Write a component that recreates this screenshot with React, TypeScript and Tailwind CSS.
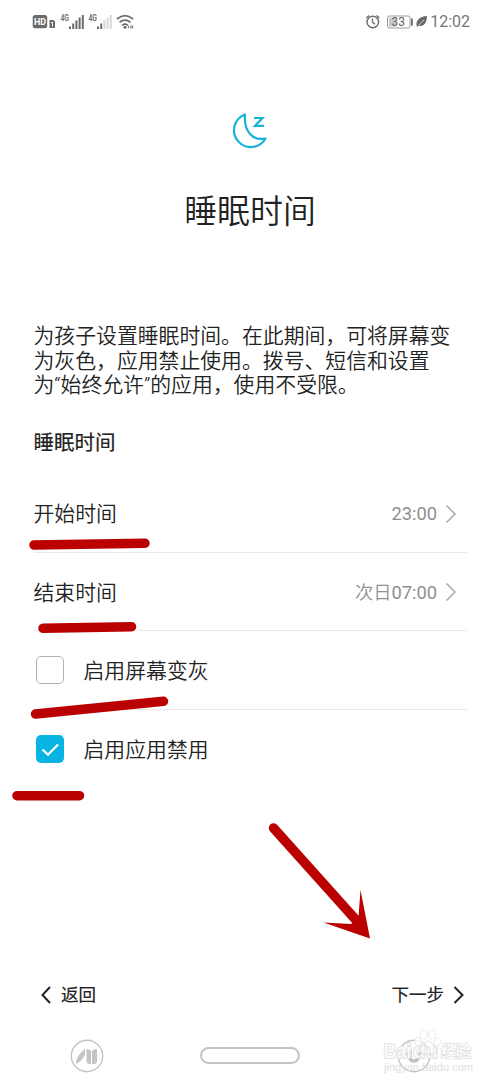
import type { ReactNode } from "react";

function StatusBar() {
  return (
    <header className="flex h-[42px] items-center justify-between pl-8 pr-[30px] pt-px text-[#6b6b6b]">
      <svg width="108" height="24" viewBox="32 9 108 24" fill="currentColor" className="font-['Roboto',sans-serif]">
        <rect x="32.7" y="14" width="14.5" height="13.3" rx="2.5" />
        <text x="34" y="24.2" fontSize="9.500" fontWeight="700" fill="#fff" textLength="12" lengthAdjust="spacingAndGlyphs">HD</text>
        <path d="M49.500 19h4l1.500 1.500V27h-5.500z" />
        <path d="M51 21.500h1.500v4" fill="none" stroke="#fff" strokeWidth="1" />
        <text x="60.500" y="19.500" fontSize="9" fontWeight="600" textLength="8.500" lengthAdjust="spacingAndGlyphs">4G</text>
        <path d="M69 25.500h2V28h-2zM72.200 22.500h2V28h-2zM75.400 19.500h2V28h-2zM78.600 16.500h2V28h-2zM81.800 14h2v14h-2z" />
        <text x="88.500" y="19.500" fontSize="9" fontWeight="600" textLength="8.500" lengthAdjust="spacingAndGlyphs">4G</text>
        <path d="M97 25.500h2V28h-2zM100.200 22.500h2V28h-2z" />
        <path d="M103.400 19.500h2V28h-2zM106.600 16.500h2V28h-2zM109.800 14h2v14h-2z" fill="#d8d8d8" />
        <path d="M117 18q8-6.600 16 0M119.500 21.400q5.500-4.500 11 0M122 24.400q3-2.400 6 0" fill="none" stroke="currentColor" strokeWidth="1.700" />
        <circle cx="125" cy="26.200" r="1.500" />
        <path d="M127.700 26l1.400-1.800V27.800zM129.500 26.500h1v-2.300h1v3.600zM132.200 24.200v3.600l1.400-1.800z" />
      </svg>
      <div className="flex items-center">
        <svg width="66" height="24" viewBox="364 9 66 24" fill="none" stroke="currentColor">
          <circle cx="372.800" cy="21" r="5.800" strokeWidth="1.400" />
          <path d="M372.500 17.500v3.800l2.500 2M366.300 17l2.800-2.500M379.300 17l-2.800-2.500" strokeWidth="1.300" />
          <rect x="387.500" y="15" width="22.500" height="12" rx="1.800" stroke="#9b9b9b" />
          <path d="M389 16.500h7v9h-7z" fill="#c9c9c9" stroke="none" />
          <path d="M411.900 17.500v7" strokeWidth="1.800" />
          <text x="391.500" y="25.200" fontSize="12" fill="#666" stroke="none" className="font-['Roboto',sans-serif]">33</text>
          <path d="M417 26c-2-6 2-10.500 10-11-0.300 7-3 11-8.500 9.800l-1.300 1.700z" fill="currentColor" stroke="none" />
          <path d="M417.500 26q3-4 6.500-7" stroke="#fff" strokeWidth=".6" />
        </svg>
        <span className="font-['Roboto',sans-serif] text-[16px] leading-none text-[#777]">12:02</span>
      </div>
    </header>
  );
}

function Chevron({ left = false }: { left?: boolean }) {
  return (
    <svg width="12" height="20" viewBox="0 0 12 20" fill="none" stroke="currentColor">
      <path d={left ? "M10 2L2.500 10L10 18" : "M1.500 1.500L10 10L1.500 18.500"} strokeWidth={left ? 2 : 1.500} />
    </svg>
  );
}

function TimeRow({ label, value }: { label: string; value: string }) {
  return (
    <div className="flex h-[78.5px] items-center justify-between border-b border-[#e9e9e9] pr-[10px]">
      <span className="pt-[4px]">{label}</span>
      <span className="flex items-center gap-[8px] pt-[2px] text-[18.3px] font-normal text-[#8f8f8f]">
        <span className="flex items-center">
          {value.startsWith("次日") && <span className="font-[350]">次日</span>}
          {value.replace("次日", "")}
        </span>
        <span className="text-[#a9a9a9]"><Chevron /></span>
      </span>
    </div>
  );
}

function CheckRow({ checked = false, children }: { checked?: boolean; children: ReactNode }) {
  return (
    <div className={`flex h-[78.5px] items-center gap-[20px] pl-0.5 ${checked ? "" : "border-b border-[#e9e9e9]"}`}>
      <span className={`flex size-7 items-center justify-center rounded-[5px] ${checked ? "bg-[#08b4e1]" : "border-[1.5px] border-[#b2b2b2]"}`}>
        {checked && (
          <svg width="28" height="28" viewBox="0 0 28 28" fill="none" stroke="#fff" strokeWidth="2.200">
            <path d="M6.500 14.500l5.500 5.200L22 9.500" />
          </svg>
        )}
      </span>
      <span className="pt-[3px]">{children}</span>
    </div>
  );
}

function Annotations() {
  return (
    <svg className="pointer-events-none absolute inset-0" width="500" height="1084" fill="none" stroke="#ba0000" strokeWidth="9.500" strokeLinecap="round">
      <path d="M34 545L145 543.300M43 628.300L131.500 626.700M35.500 714L163.500 701.300M17 795.700H79.500" />
      <path d="M273.500 828L356 920" />
      <path d="M370 938.500L323.500 922.500L351 924L358.500 917L360.500 890Z" fill="#ba0000" stroke="none" />
    </svg>
  );
}

function NavigationBar() {
  return (
    <nav className="flex h-[57px] items-center justify-between pl-[70px] pr-[69px] text-[#c4c4c4]">
      <svg width="34" height="34" viewBox="0 0 34 34" fill="none" stroke="currentColor">
        <circle cx="17" cy="17" r="15.700" strokeWidth="1.400" />
        <path d="M6 25v-3q3-8 9-12v6q-3 6-9 9zM16.500 10l4.500 1.500V25h-2q-2.500-.5-2.500-3zM27 10v12q0 3-3 3h-2V12q1.500-2 5-2z" fill="currentColor" stroke="none" />
      </svg>
      <div className="mr-[2px] h-[17px] w-[100px] rounded-full border-2 border-[#c4c4c4]" />
      <svg width="34" height="34" viewBox="0 0 34 34" fill="none" stroke="currentColor">
        <circle cx="17" cy="17" r="15.700" strokeWidth="1.400" />
        <path d="M13 10v8q0 4 4 4t4-4M7 16h4M22 16l4-4" strokeWidth="3.500" />
      </svg>
    </nav>
  );
}

function Watermark() {
  return (
    <svg className="pointer-events-none absolute bottom-0 right-0" width="130" height="64" viewBox="370 1020 130 64">
      <g fill="#fff" stroke="#dedede" strokeWidth="1.600" paintOrder="stroke" className="font-['Liberation_Sans','Noto_Sans_CJK_SC',sans-serif]">
        <text x="383.500" y="1057.500" fontSize="20" fontWeight="700" fillOpacity=".8" textLength="28" lengthAdjust="spacingAndGlyphs">Bai</text>
        <text x="413" y="1057.500" fontSize="20" fontWeight="700" fillOpacity=".7" textLength="25" lengthAdjust="spacingAndGlyphs">du</text>
        <text x="441" y="1057" fontSize="16" fontWeight="500" textLength="30" lengthAdjust="spacingAndGlyphs">经验</text>
        <g strokeWidth="1" fillOpacity=".8">
          <ellipse cx="418" cy="1041.500" rx="3" ry="4" transform="rotate(-20 418 1041.500)" />
          <ellipse cx="424" cy="1034.500" rx="3.200" ry="4.500" />
          <ellipse cx="432" cy="1034.500" rx="3.200" ry="4.500" transform="rotate(12 432 1034.500)" />
          <ellipse cx="437.500" cy="1042" rx="3" ry="4" transform="rotate(25 437.500 1042)" />
          <path d="M424 1044q4-6 8 0l4 4q2 5-3 6h-10q-6-1-3-6z" fillOpacity=".15" />
        </g>
      </g>
      <text x="384" y="1070.500" fontSize="11" fill="#dedede" textLength="89" lengthAdjust="spacingAndGlyphs" className="font-['Liberation_Sans',sans-serif]">jingyan.baidu.com</text>
    </svg>
  );
}

export default function App() {
  return (
    <div className="relative flex h-[1084px] w-[500px] flex-col overflow-hidden bg-white font-['Roboto','Noto_Sans_CJK_SC',sans-serif] text-[#222]">
      <StatusBar />
      <div className="flex flex-col items-center pt-[70px]">
        <svg width="38" height="38" viewBox="232 112 38 38" fill="none" stroke="#15b3d8" strokeWidth="2.200">
          <path d="M246 114.500A16.800 16.800 0 1 0 266.500 138.500Q257 140.500 251 134T246 114.500Z" strokeLinejoin="round" />
          <path d="M255 118H263.500L256 125.800H265" strokeWidth="2.200" />
        </svg>
        <h1 className="mt-[38px] text-[32.9px] font-[350] leading-[48px]">睡眠时间</h1>
      </div>
      <main className="flex flex-col pl-[33.5px] pr-[33px] pt-[88px] text-[20.85px] font-[350]">
        <p className="whitespace-nowrap leading-[24.5px]">
          为孩子设置睡眠时间。在此期间，可将屏幕变<br />
          为灰色，应用禁止使用。拨号、短信和设置<br />
          为“始终允许”的应用，使用不受限。
        </p>
        <h2 className="mb-[16px] mt-[30.5px] text-[20.5px] font-normal leading-[30px] [-webkit-text-stroke:0.2px]">睡眠时间</h2>
        <TimeRow label="开始时间" value="23:00" />
        <TimeRow label="结束时间" value="次日07:00" />
        <CheckRow>启用屏幕变灰</CheckRow>
        <CheckRow checked>启用应用禁用</CheckRow>
      </main>
      <footer className="mt-auto">
        <div className="flex h-[64px] items-center justify-between pl-[40px] pr-[35px] text-[17.5px] font-normal [-webkit-text-stroke:0.2px]">
          <button className="flex items-center gap-[9px]"><Chevron left />返回</button>
          <button className="flex items-center gap-[9px]">下一步
            <svg width="12" height="20" viewBox="0 0 12 20" fill="none" stroke="currentColor" strokeWidth="2"><path d="M1.500 2L9.500 10L1.500 18" /></svg>
          </button>
        </div>
        <NavigationBar />
      </footer>
      <Annotations />
      <Watermark />
    </div>
  );
}
